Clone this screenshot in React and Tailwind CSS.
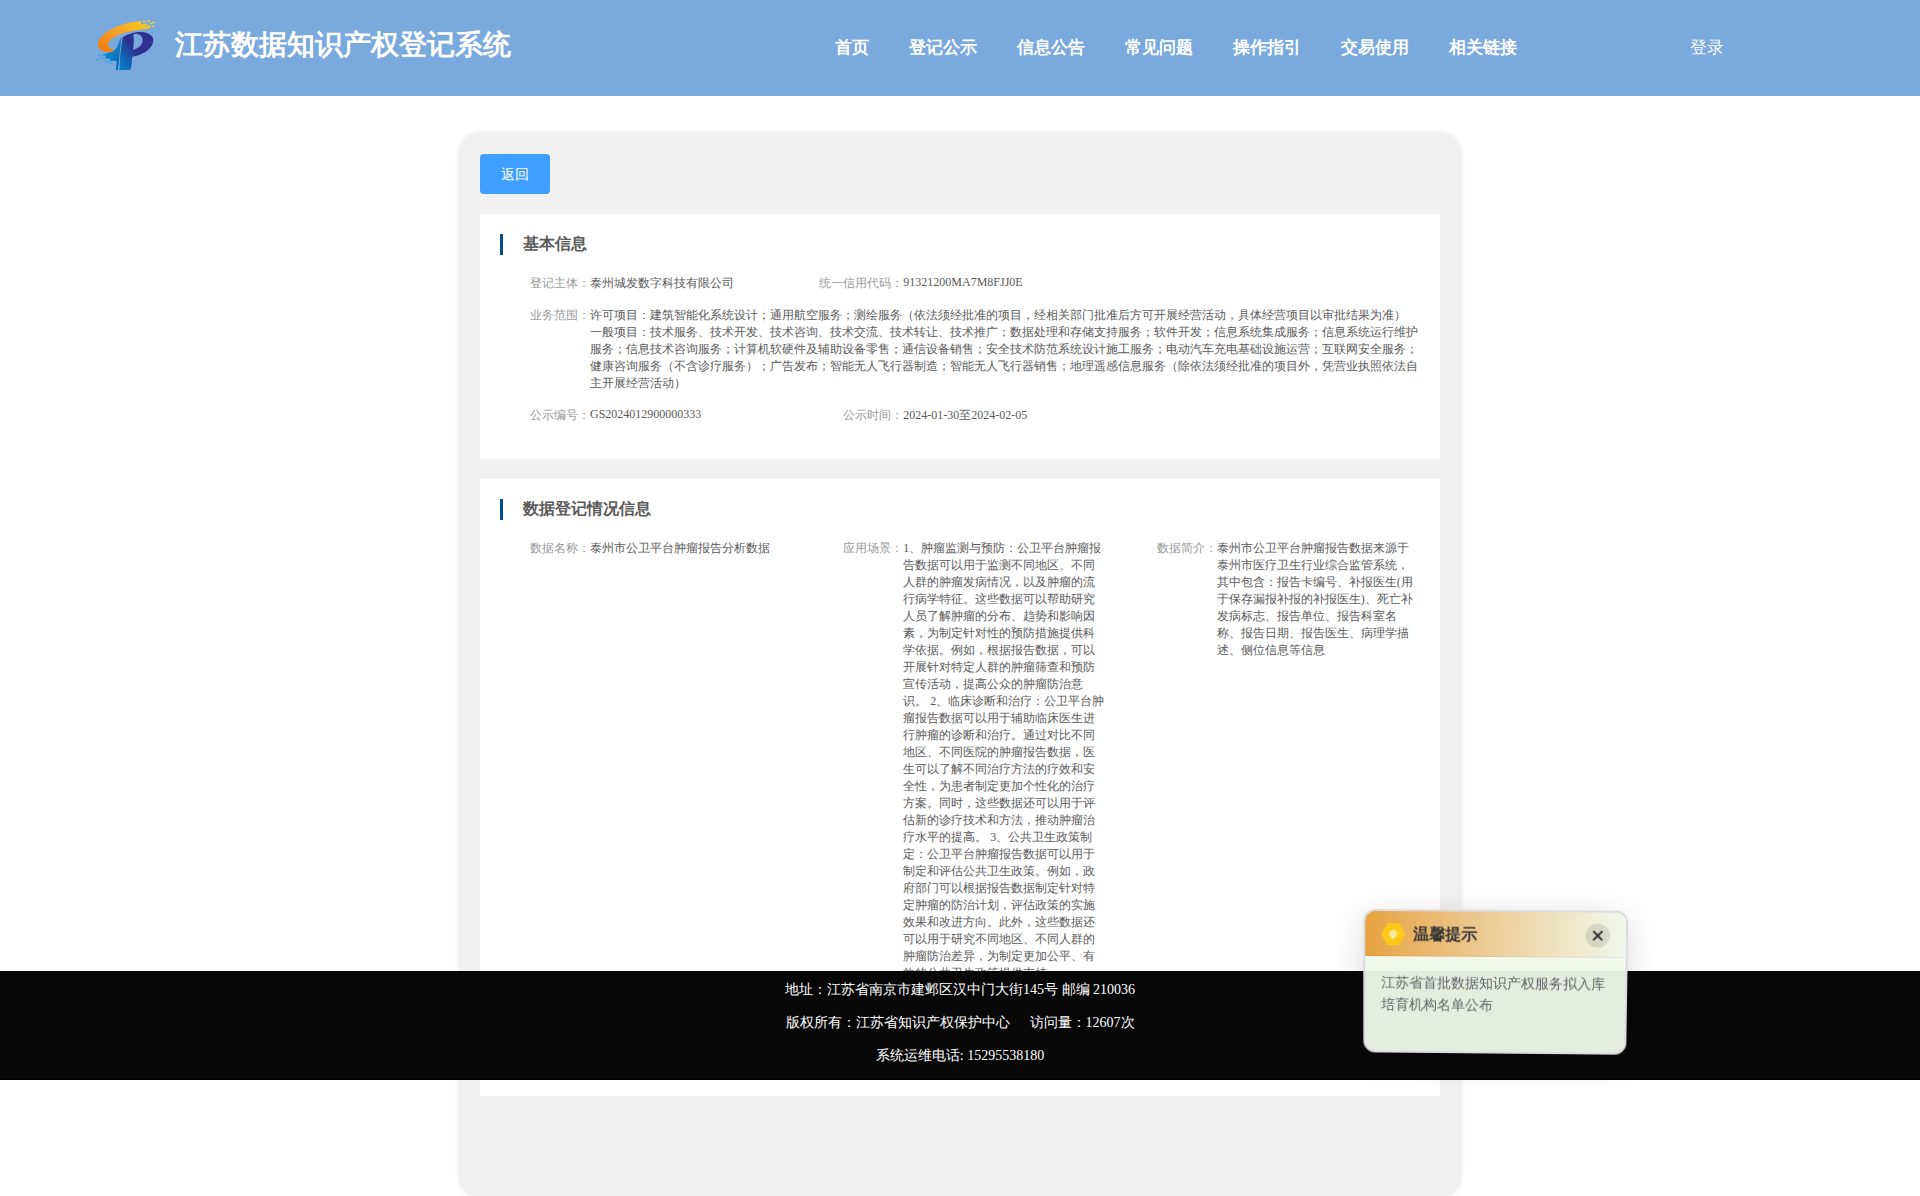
const NAV = ['首页', '登记公示', '信息公告', '常见问题', '操作指引', '交易使用', '相关链接'];

const SCOPE = [
  '许可项目：建筑智能化系统设计；通用航空服务；测绘服务（依法须经批准的项目，经相关部门批准后方可开展经营活动，具体经营项目以审批结果为准）',
  '一般项目：技术服务、技术开发、技术咨询、技术交流、技术转让、技术推广；数据处理和存储支持服务；软件开发；信息系统集成服务；信息系统运行维护服务；信息技术咨询服务；计算机软硬件及辅助设备零售；通信设备销售；安全技术防范系统设计施工服务；电动汽车充电基础设施运营；互联网安全服务；健康咨询服务（不含诊疗服务）；广告发布；智能无人飞行器制造；智能无人飞行器销售；地理遥感信息服务（除依法须经批准的项目外，凭营业执照依法自主开展经营活动）',
];

const SCENE =
  '1、肿瘤监测与预防：公卫平台肿瘤报告数据可以用于监测不同地区、不同人群的肿瘤发病情况，以及肿瘤的流行病学特征。这些数据可以帮助研究人员了解肿瘤的分布、趋势和影响因素，为制定针对性的预防措施提供科学依据。例如，根据报告数据，可以开展针对特定人群的肿瘤筛查和预防宣传活动，提高公众的肿瘤防治意识。 2、临床诊断和治疗：公卫平台肿瘤报告数据可以用于辅助临床医生进行肿瘤的诊断和治疗。通过对比不同地区、不同医院的肿瘤报告数据，医生可以了解不同治疗方法的疗效和安全性，为患者制定更加个性化的治疗方案。同时，这些数据还可以用于评估新的诊疗技术和方法，推动肿瘤治疗水平的提高。 3、公共卫生政策制定：公卫平台肿瘤报告数据可以用于制定和评估公共卫生政策。例如，政府部门可以根据报告数据制定针对特定肿瘤的防治计划，评估政策的实施效果和改进方向。此外，这些数据还可以用于研究不同地区、不同人群的肿瘤防治差异，为制定更加公平、有效的公共卫生政策提供支持。';

const INTRO =
  '泰州市公卫平台肿瘤报告数据来源于泰州市医疗卫生行业综合监管系统，其中包含：报告卡编号、补报医生(用于保存漏报补报的补报医生)、死亡补发病标志、报告单位、报告科室名称、报告日期、报告医生、病理学描述、侧位信息等信息';

function Logo() {
  return (
    <svg className="ml-[90px] mt-2.5 h-[70px] w-20 shrink-0" viewBox="0 0 240 210">
      <defs>
        <linearGradient id="ring" x1="0" y1="1" x2="1" y2="0">
          <stop offset="0.1" stopColor="#f07f10" />
          <stop offset="0.55" stopColor="#f8a428" />
          <stop offset="1" stopColor="#fcd217" />
        </linearGradient>
        <linearGradient id="stem" gradientUnits="userSpaceOnUse" x1="88" y1="160" x2="136" y2="120">
          <stop offset="0" stopColor="#0a7ac4" />
          <stop offset="0.5" stopColor="#155bab" />
          <stop offset="1" stopColor="#2e3192" />
        </linearGradient>
        <linearGradient id="tail" x1="0" y1="0" x2="1" y2="1">
          <stop offset="0" stopColor="#1b9ade" />
          <stop offset="1" stopColor="#0461ad" />
        </linearGradient>
      </defs>
      <path d="M152 33C92 38 24 68 24 104C24 126 54 130 82 121C58 119 46 106 60 91C82 68 134 60 176 56L184 53L166 50L172 44L154 42Z" fill="url(#ring)" />
      <path d="M158 33h8v4h-8zM172 30h7v5h-7zM163 41h7v4h-7zM180 39h6v4h-6zM187 35h7v5h-7zM172 46h8v5h-8zM185 47h7v5h-7z" fill="#fcd217" />
      <path d="M91 84C85 104 80 124 60 127L34 135L48 138L44 144L62 147L58 152L80 153L78 180H84L94 84Z" fill="url(#tail)" />
      <path d="M24 134h7v4h-7zM30 141h7v4h-7zM19 147h6v4h-6zM40 147h7v4h-7zM48 154h7v4h-7zM59 157h6v4h-6z" fill="#2ba4e2" />
      <path
        d="M98 82C112 72 134 66 152 66C180 67 194 80 189 98C182 120 156 135 127 140C125 155 125 172 122 177L118 180H88C89 148 93 112 98 82ZM130 74C133 90 131 108 129 120C147 114 158 105 158 91C158 77 148 71 136 71Z"
        fill="url(#stem)"
        fillRule="evenodd"
      />
    </svg>
  );
}

function Field({ label, children, wide, latin }) {
  return (
    <div className={wide ? 'col-span-3 flex pr-5' : 'flex pr-5'}>
      <div className="w-[90px] shrink-0 whitespace-nowrap text-right text-[#999]">{label}：</div>
      <div className={latin ? 'relative -top-px min-w-0 flex-1' : 'min-w-0 flex-1'}>{children}</div>
    </div>
  );
}

function Section({ title, className, children }) {
  return (
    <section className={`bg-white pt-5 ${className}`}>
      <h2 className="ml-5 h-[21px] border-l-[3px] border-[#00508e] pl-5 text-base leading-[19px] font-bold">{title}</h2>
      <div className="ml-5 mt-5 grid grid-cols-3 gap-y-[15px] text-xs leading-[17px]">{children}</div>
    </section>
  );
}

function Tip() {
  return (
    <aside className="absolute left-[1363px] top-[910px] h-[144px] w-[264px] overflow-hidden rounded-xl border-2 border-[#dcdcdf] bg-[#f0f9eb]/95 shadow-[0_8px_32px_rgba(0,0,0,0.15)] [transform:perspective(1000px)_rotateX(-3.5deg)_rotateY(-1deg)_rotateZ(0.41deg)]">
      <div className="flex h-[45px] items-center border-b border-black/5 bg-linear-to-r from-[#e6a23c] to-[#f0f9eb] px-4 pt-0.5">
        <svg className="size-6" viewBox="0 0 24 24">
          <path d="M6 1h12l6 11-6 11H6L0 12Z" fill="#ffc917" />
          <circle cx="12" cy="11.5" r="3.4" fill="#ffe27a" stroke="#fff3c4" strokeWidth="1" />
          <path d="M10.5 10.5l1.5 2 1.5-2M12 12.5v2" stroke="#fffbe8" strokeWidth="0.8" fill="none" />
          <path d="M10.3 15.6h3.4" stroke="#fffbe8" strokeWidth="1.2" />
        </svg>
        <span className="ml-2 text-base leading-5 font-bold text-[#303133]">温馨提示</span>
        <span className="ml-auto flex size-6 items-center justify-center rounded-full bg-black/10">
          <svg className="size-3" viewBox="0 0 12 12" stroke="#303133" strokeWidth="1.8">
            <path d="M1.5 1.5l9 9M10.5 1.5l-9 9" />
          </svg>
        </span>
      </div>
      <p className="px-4 py-4 text-sm leading-[22px] text-[#606266]">江苏省首批数据知识产权服务拟入库培育机构名单公布</p>
    </aside>
  );
}

export default function App() {
  return (
    <div className="relative h-[1196px] w-[1920px] overflow-hidden bg-white text-[#5a5a5a] [font-family:'Liberation_Serif',serif]">
      <header className="flex h-24 bg-[#79a9dd] text-white">
        <Logo />
        <h1 className="ml-[5px] mt-[25px] w-[640px] text-[28px] leading-10 font-bold">江苏数据知识产权登记系统</h1>
        <nav className="flex h-24 items-center gap-10 pl-5 text-[17px] font-bold">
          {NAV.map((n) => (
            <a key={n}>{n}</a>
          ))}
        </nav>
        <a className="ml-[173px] flex h-24 items-center text-[17px]">登录</a>
      </header>

      <main className="mx-auto mt-[38px] h-[1062px] w-[1000px] rounded-[20px] bg-[#f1f1f1] p-5 shadow-[0_0_6px_rgba(0,0,0,0.15)]">
        <button className="block h-10 w-[70px] rounded bg-[#409eff] pt-0.5 text-sm text-white">返回</button>
        <Section title="基本信息" className="mt-5 h-[245px]">
          <Field label="登记主体">泰州城发数字科技有限公司</Field>
          <Field label="统一信用代码" latin>91321200MA7M8FJJ0E</Field>
          <div />
          <Field label="业务范围" wide>
            {SCOPE.map((s) => (
              <p key={s}>{s}</p>
            ))}
          </Field>
          <Field label="公示编号" latin>GS2024012900000333</Field>
          <Field label="公示时间">2024-01-30至2024-02-05</Field>
        </Section>
        <Section title="数据登记情况信息" className="mt-5 h-[617px]">
          <Field label="数据名称">泰州市公卫平台肿瘤报告分析数据</Field>
          <Field label="应用场景">{SCENE}</Field>
          <Field label="数据简介">{INTRO}</Field>
        </Section>
      </main>

      <footer className="absolute inset-x-0 top-[971px] h-[109px] border-b border-black bg-[#070707] text-center text-sm leading-[33px] text-white">
        <p className="mt-0.5">地址：江苏省南京市建邺区汉中门大街145号 邮编 210036</p>
        <p>
          版权所有：江苏省知识产权保护中心<span className="ml-5">访问量：12607次</span>
        </p>
        <p>系统运维电话: 15295538180</p>
      </footer>

      <Tip />
    </div>
  );
}
